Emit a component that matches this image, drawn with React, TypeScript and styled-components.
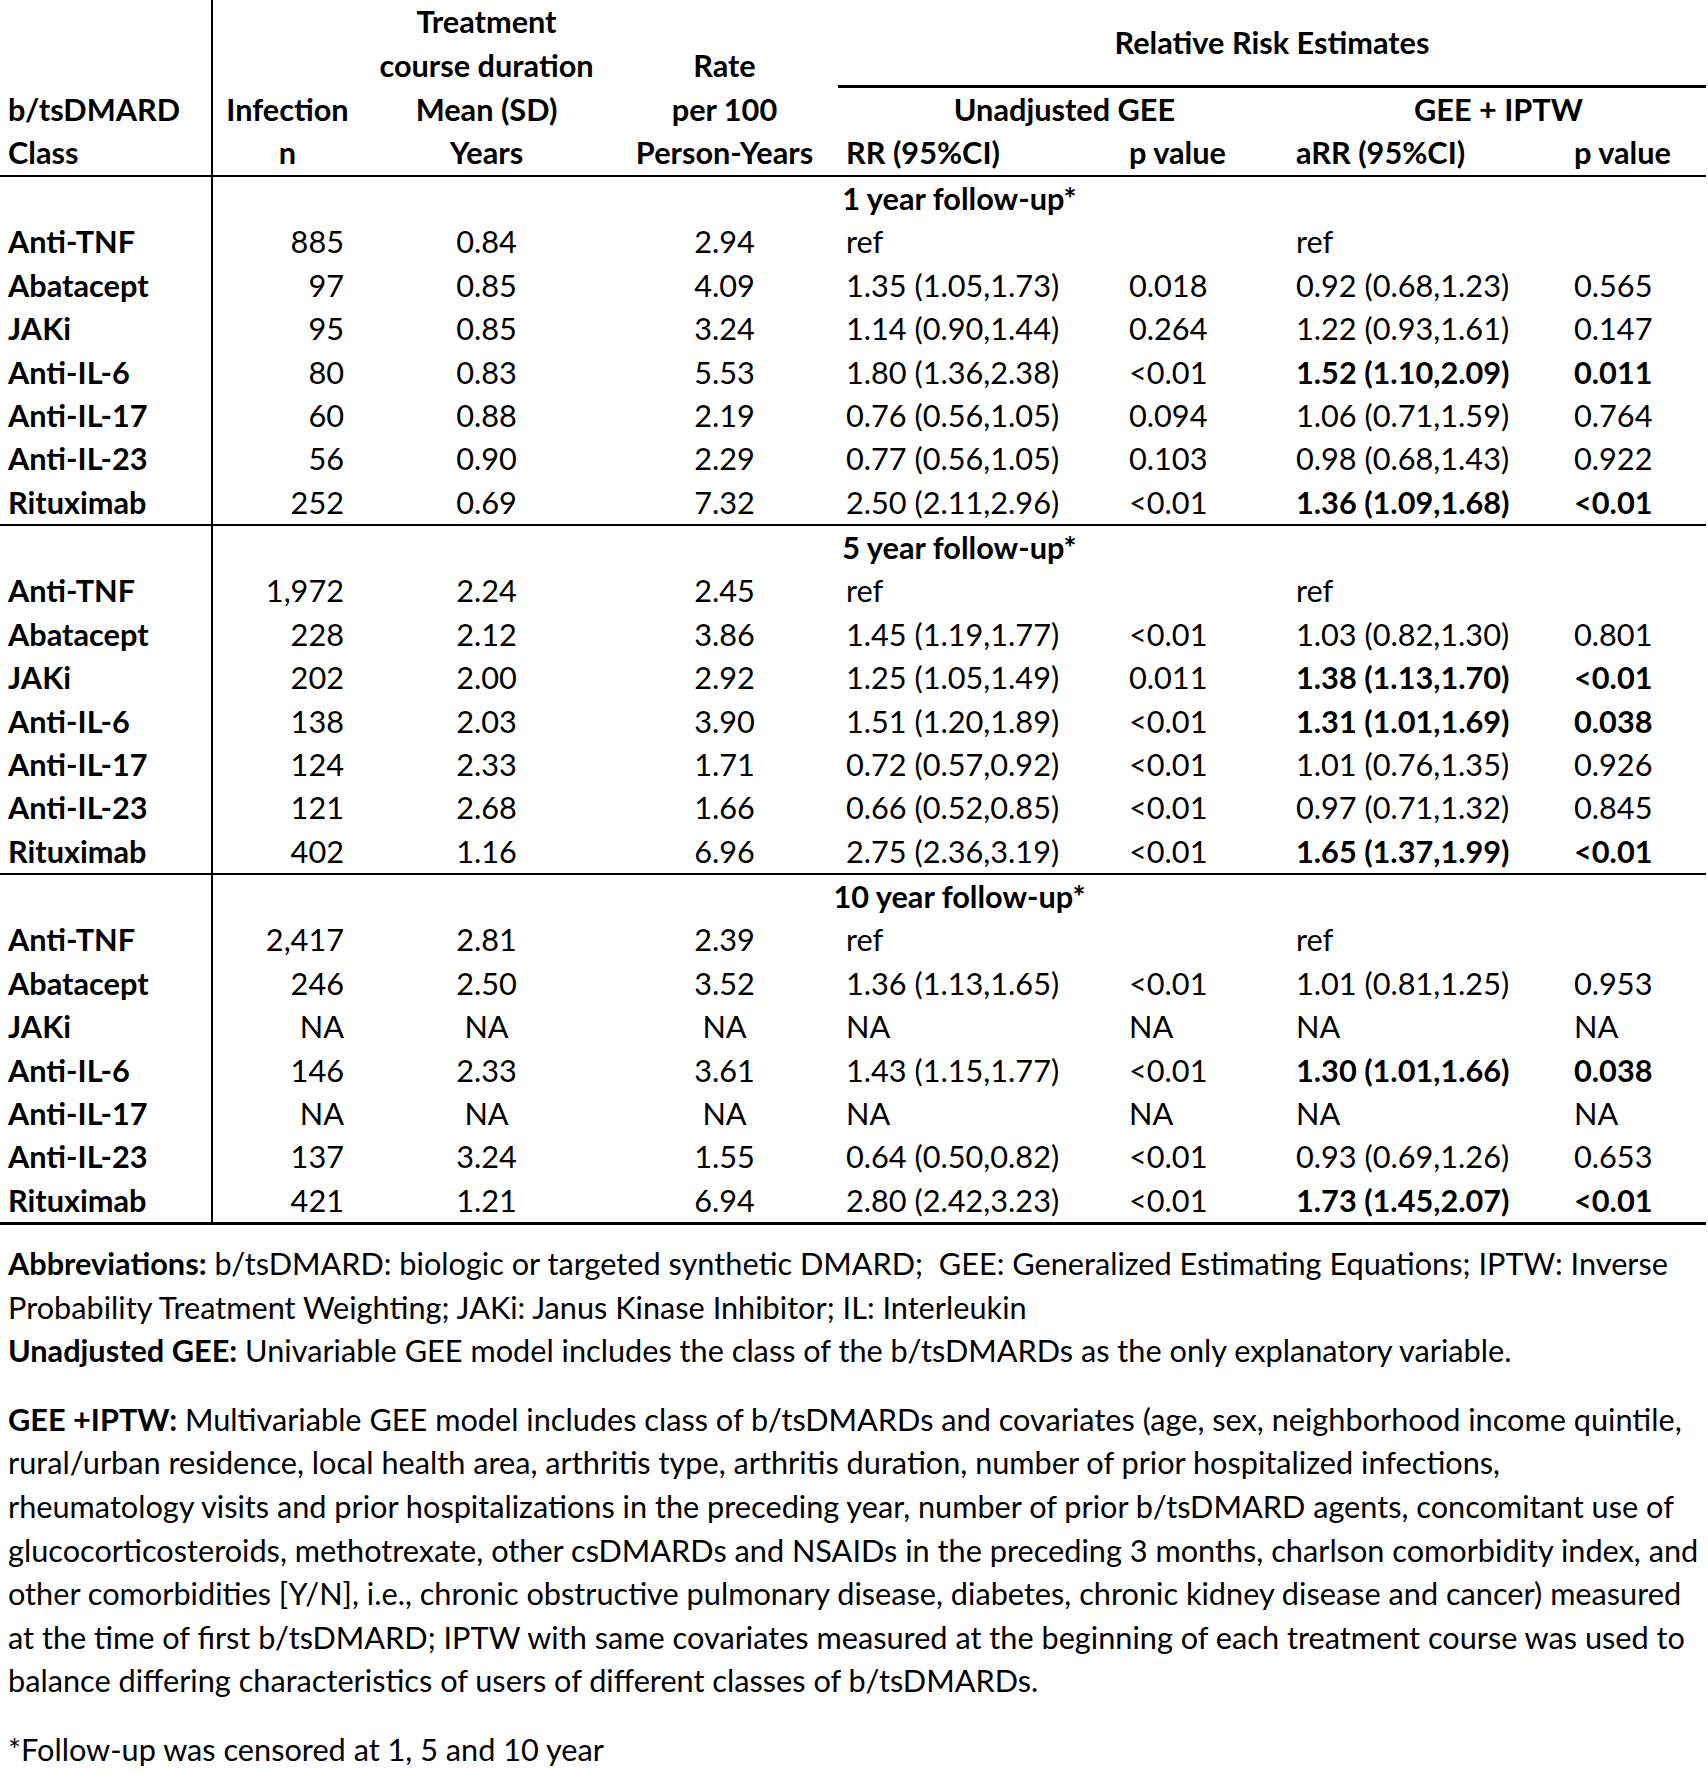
import React from 'react';
import styled, { createGlobalStyle } from 'styled-components';

const GlobalStyle = createGlobalStyle`
  html, body { margin: 0; padding: 0; background: #ffffff; }
  body {
    font-family: Lato, "Open Sans", "Liberation Sans", sans-serif;
    color: #000000;
    font-size: 30.7px;
  }
`;

const COLS = '213px 149px 249px 227px 283px 170px 275px 140px';
const HEAD_ROW = 43.75;
const BODY_ROW = 43.375;

const Page = styled.div`
  width: 1708px;
  letter-spacing: 0;
`;

const Table = styled.div`
  width: 1706px;
  border-bottom: 3px solid #000;
`;

const Header = styled.div`
  display: grid;
  grid-template-columns: ${COLS};
  grid-template-rows: repeat(4, ${HEAD_ROW}px);
  border-bottom: 2px solid #000;
  font-weight: 700;
`;

const HeadStack = styled.div<{ $col: number; $align: 'left' | 'center'; $stub?: boolean }>`
  grid-column: ${(p) => p.$col} / span 1;
  grid-row: 1 / 5;
  display: flex;
  flex-direction: column;
  justify-content: flex-end;
  text-align: ${(p) => p.$align};
  padding-left: ${(p) => (p.$stub ? '8px' : '0')};
  border-right: ${(p) => (p.$stub ? '2px solid #000' : 'none')};
`;

const HeadLine = styled.div`
  height: ${HEAD_ROW}px;
  line-height: ${HEAD_ROW}px;
  white-space: nowrap;
`;

const Spanner = styled.div<{ $from: number; $to: number; $rowFrom: number; $rowTo: number; $rule?: boolean }>`
  grid-column: ${(p) => p.$from} / ${(p) => p.$to};
  grid-row: ${(p) => p.$rowFrom} / ${(p) => p.$rowTo};
  display: flex;
  align-items: center;
  justify-content: center;
  white-space: nowrap;
  border-bottom: ${(p) => (p.$rule ? '3px solid #000' : 'none')};
`;

const SubHead = styled.div<{ $col: number; $pad: number }>`
  grid-column: ${(p) => p.$col} / span 1;
  grid-row: 4 / 5;
  line-height: ${HEAD_ROW}px;
  padding-left: ${(p) => p.$pad}px;
  white-space: nowrap;
`;

const Section = styled.div`
  display: grid;
  grid-template-columns: ${COLS};
  grid-auto-rows: ${BODY_ROW}px;
  &:not(:last-child) {
    border-bottom: 2px solid #000;
  }
`;

const Stub = styled.div`
  font-weight: 700;
  padding-left: 8px;
  line-height: ${BODY_ROW}px;
  border-right: 2px solid #000;
  white-space: nowrap;
`;

const SectionLabel = styled.div`
  grid-column: 2 / -1;
  text-align: center;
  font-weight: 700;
  line-height: ${BODY_ROW}px;
  white-space: nowrap;
`;

const Cell = styled.div<{ $align: 'left' | 'right' | 'center'; $padL?: number; $padR?: number; $bold?: boolean }>`
  text-align: ${(p) => p.$align};
  padding-left: ${(p) => p.$padL ?? 0}px;
  padding-right: ${(p) => p.$padR ?? 0}px;
  font-weight: ${(p) => (p.$bold ? 700 : 400)};
  line-height: ${BODY_ROW}px;
  white-space: nowrap;
`;

const Notes = styled.div`
  padding-top: 17px;
  padding-left: 8px;
`;

const Para = styled.div`
  & + & {
    margin-top: 25px;
  }
`;

const NoteLine = styled.div`
  height: 43.6px;
  line-height: 43.6px;
  white-space: pre;
`;

const Strong = styled.span`
  font-weight: 700;
`;

type Row = {
  name: string;
  n: string;
  mean: string;
  rate: string;
  rr: string;
  p: string;
  arr: string;
  ap: string;
  bold?: boolean;
};

const sections: { label: string; rows: Row[] }[] = [
  {
    label: '1 year follow-up*',
    rows: [
      { name: 'Anti-TNF', n: '885', mean: '0.84', rate: '2.94', rr: 'ref', p: '', arr: 'ref', ap: '' },
      { name: 'Abatacept', n: '97', mean: '0.85', rate: '4.09', rr: '1.35 (1.05,1.73)', p: '0.018', arr: '0.92 (0.68,1.23)', ap: '0.565' },
      { name: 'JAKi', n: '95', mean: '0.85', rate: '3.24', rr: '1.14 (0.90,1.44)', p: '0.264', arr: '1.22 (0.93,1.61)', ap: '0.147' },
      { name: 'Anti-IL-6', n: '80', mean: '0.83', rate: '5.53', rr: '1.80 (1.36,2.38)', p: '<0.01', arr: '1.52 (1.10,2.09)', ap: '0.011', bold: true },
      { name: 'Anti-IL-17', n: '60', mean: '0.88', rate: '2.19', rr: '0.76 (0.56,1.05)', p: '0.094', arr: '1.06 (0.71,1.59)', ap: '0.764' },
      { name: 'Anti-IL-23', n: '56', mean: '0.90', rate: '2.29', rr: '0.77 (0.56,1.05)', p: '0.103', arr: '0.98 (0.68,1.43)', ap: '0.922' },
      { name: 'Rituximab', n: '252', mean: '0.69', rate: '7.32', rr: '2.50 (2.11,2.96)', p: '<0.01', arr: '1.36 (1.09,1.68)', ap: '<0.01', bold: true },
    ],
  },
  {
    label: '5 year follow-up*',
    rows: [
      { name: 'Anti-TNF', n: '1,972', mean: '2.24', rate: '2.45', rr: 'ref', p: '', arr: 'ref', ap: '' },
      { name: 'Abatacept', n: '228', mean: '2.12', rate: '3.86', rr: '1.45 (1.19,1.77)', p: '<0.01', arr: '1.03 (0.82,1.30)', ap: '0.801' },
      { name: 'JAKi', n: '202', mean: '2.00', rate: '2.92', rr: '1.25 (1.05,1.49)', p: '0.011', arr: '1.38 (1.13,1.70)', ap: '<0.01', bold: true },
      { name: 'Anti-IL-6', n: '138', mean: '2.03', rate: '3.90', rr: '1.51 (1.20,1.89)', p: '<0.01', arr: '1.31 (1.01,1.69)', ap: '0.038', bold: true },
      { name: 'Anti-IL-17', n: '124', mean: '2.33', rate: '1.71', rr: '0.72 (0.57,0.92)', p: '<0.01', arr: '1.01 (0.76,1.35)', ap: '0.926' },
      { name: 'Anti-IL-23', n: '121', mean: '2.68', rate: '1.66', rr: '0.66 (0.52,0.85)', p: '<0.01', arr: '0.97 (0.71,1.32)', ap: '0.845' },
      { name: 'Rituximab', n: '402', mean: '1.16', rate: '6.96', rr: '2.75 (2.36,3.19)', p: '<0.01', arr: '1.65 (1.37,1.99)', ap: '<0.01', bold: true },
    ],
  },
  {
    label: '10 year follow-up*',
    rows: [
      { name: 'Anti-TNF', n: '2,417', mean: '2.81', rate: '2.39', rr: 'ref', p: '', arr: 'ref', ap: '' },
      { name: 'Abatacept', n: '246', mean: '2.50', rate: '3.52', rr: '1.36 (1.13,1.65)', p: '<0.01', arr: '1.01 (0.81,1.25)', ap: '0.953' },
      { name: 'JAKi', n: 'NA', mean: 'NA', rate: 'NA', rr: 'NA', p: 'NA', arr: 'NA', ap: 'NA' },
      { name: 'Anti-IL-6', n: '146', mean: '2.33', rate: '3.61', rr: '1.43 (1.15,1.77)', p: '<0.01', arr: '1.30 (1.01,1.66)', ap: '0.038', bold: true },
      { name: 'Anti-IL-17', n: 'NA', mean: 'NA', rate: 'NA', rr: 'NA', p: 'NA', arr: 'NA', ap: 'NA' },
      { name: 'Anti-IL-23', n: '137', mean: '3.24', rate: '1.55', rr: '0.64 (0.50,0.82)', p: '<0.01', arr: '0.93 (0.69,1.26)', ap: '0.653' },
      { name: 'Rituximab', n: '421', mean: '1.21', rate: '6.94', rr: '2.80 (2.42,3.23)', p: '<0.01', arr: '1.73 (1.45,2.07)', ap: '<0.01', bold: true },
    ],
  },
];

export default function App() {
  return (
    <Page>
      <GlobalStyle />
      <Table>
        <Header>
          <HeadStack $col={1} $align="left" $stub>
            <HeadLine>b/tsDMARD</HeadLine>
            <HeadLine>Class</HeadLine>
          </HeadStack>
          <HeadStack $col={2} $align="center">
            <HeadLine>Infection</HeadLine>
            <HeadLine>n</HeadLine>
          </HeadStack>
          <HeadStack $col={3} $align="center">
            <HeadLine>Treatment</HeadLine>
            <HeadLine>course duration</HeadLine>
            <HeadLine>Mean (SD)</HeadLine>
            <HeadLine>Years</HeadLine>
          </HeadStack>
          <HeadStack $col={4} $align="center">
            <HeadLine>Rate</HeadLine>
            <HeadLine>per 100</HeadLine>
            <HeadLine>Person-Years</HeadLine>
          </HeadStack>
          <Spanner $from={5} $to={9} $rowFrom={1} $rowTo={3} $rule>
            Relative Risk Estimates
          </Spanner>
          <Spanner $from={5} $to={7} $rowFrom={3} $rowTo={4}>
            Unadjusted GEE
          </Spanner>
          <Spanner $from={7} $to={9} $rowFrom={3} $rowTo={4}>
            GEE + IPTW
          </Spanner>
          <SubHead $col={5} $pad={8}>RR (95%CI)</SubHead>
          <SubHead $col={6} $pad={8}>p value</SubHead>
          <SubHead $col={7} $pad={5}>aRR (95%CI)</SubHead>
          <SubHead $col={8} $pad={8}>p value</SubHead>
        </Header>
        {sections.map((s) => (
          <Section key={s.label}>
            <Stub />
            <SectionLabel>{s.label}</SectionLabel>
            {s.rows.map((r) => (
              <React.Fragment key={s.label + r.name}>
                <Stub>{r.name}</Stub>
                <Cell $align="right" $padR={18}>{r.n}</Cell>
                <Cell $align="center">{r.mean}</Cell>
                <Cell $align="center">{r.rate}</Cell>
                <Cell $align="left" $padL={8}>{r.rr}</Cell>
                <Cell $align="left" $padL={8}>{r.p}</Cell>
                <Cell $align="left" $padL={5} $bold={r.bold}>{r.arr}</Cell>
                <Cell $align="left" $padL={8} $bold={r.bold}>{r.ap}</Cell>
              </React.Fragment>
            ))}
          </Section>
        ))}
      </Table>
      <Notes>
        <Para>
          <NoteLine>
            <Strong>Abbreviations:</Strong> b/tsDMARD: biologic or targeted synthetic DMARD;  GEE: Generalized Estimating Equations; IPTW: Inverse
          </NoteLine>
          <NoteLine>Probability Treatment Weighting; JAKi: Janus Kinase Inhibitor; IL: Interleukin</NoteLine>
          <NoteLine>
            <Strong>Unadjusted GEE:</Strong> Univariable GEE model includes the class of the b/tsDMARDs as the only explanatory variable.
          </NoteLine>
        </Para>
        <Para>
          <NoteLine>
            <Strong>GEE +IPTW:</Strong> Multivariable GEE model includes class of b/tsDMARDs and covariates (age, sex, neighborhood income quintile,
          </NoteLine>
          <NoteLine>rural/urban residence, local health area, arthritis type, arthritis duration, number of prior hospitalized infections,</NoteLine>
          <NoteLine>rheumatology visits and prior hospitalizations in the preceding year, number of prior b/tsDMARD agents, concomitant use of</NoteLine>
          <NoteLine>glucocorticosteroids, methotrexate, other csDMARDs and NSAIDs in the preceding 3 months, charlson comorbidity index, and</NoteLine>
          <NoteLine>other comorbidities [Y/N], i.e., chronic obstructive pulmonary disease, diabetes, chronic kidney disease and cancer) measured</NoteLine>
          <NoteLine>at the time of first b/tsDMARD; IPTW with same covariates measured at the beginning of each treatment course was used to</NoteLine>
          <NoteLine>balance differing characteristics of users of different classes of b/tsDMARDs.</NoteLine>
        </Para>
        <Para>
          <NoteLine>*Follow-up was censored at 1, 5 and 10 year</NoteLine>
        </Para>
      </Notes>
    </Page>
  );
}
